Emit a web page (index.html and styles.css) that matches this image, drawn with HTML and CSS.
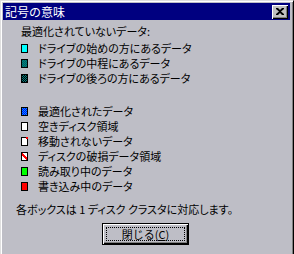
FILE: index.html
```html
<!DOCTYPE html>
<html lang="ja">
<head>
    <meta charset="UTF-8">
    <title>記号の意味</title>
    <link rel="stylesheet" href="styles.css">
</head>
<body>
    <div class="window">
        <div class="titlebar">
            <span class="title">記号の意味</span>
            <button class="close-btn" aria-label="閉じる">
                <svg width="8" height="7" viewBox="0 0 8 7">
                    <path d="M0 0h2l2 2 2-2h2v1l-3 2.5 3 2.5v1h-2l-2-2-2 2h-2v-1l3-2.5-3-2.5z" fill="#000"/>
                </svg>
            </button>
        </div>
        <div class="content">
            <div class="heading">最適化されていないデータ:</div>
            <ul class="legend">
                <li><span class="box cyan"></span>ドライブの始めの方にあるデータ</li>
                <li><span class="box teal"></span>ドライブの中程にあるデータ</li>
                <li><span class="box dark-teal"></span>ドライブの後ろの方にあるデータ</li>
            </ul>
            <ul class="legend second">
                <li><span class="box blue"></span>最適化されたデータ</li>
                <li><span class="box white"></span>空きディスク領域</li>
                <li><span class="box white fixed"></span>移動されないデータ</li>
                <li><span class="box white bad"></span>ディスクの破損データ領域</li>
                <li><span class="box green"></span>読み取り中のデータ</li>
                <li><span class="box red"></span>書き込み中のデータ</li>
            </ul>
            <p class="note">各ボックスは 1 ディスク クラスタに対応します。</p>
            <div class="actions">
                <button class="btn-default"><span class="focus">閉じる(<u>C</u>)</span></button>
            </div>
        </div>
    </div>
</body>
</html>
```

FILE: styles.css
```css
body {
    margin: 0;
    padding: 0;
    background: #bebec6;
    font-family: "Noto Sans CJK JP", "Noto Sans", sans-serif;
    color: #000;
}

.window {
    width: 294px;
    height: 254px;
    box-sizing: border-box;
    background: #bebec6;
    border-top: 1px solid #dfdfdf;
    border-left: 1px solid #dfdfdf;
    border-right: 1px solid #000;
    box-shadow: inset 1px 1px 0 #fff, inset -1px 0 0 #808080;
    padding: 2px 3px 0 2px;
    overflow: hidden;
}

.titlebar {
    height: 17px;
    background: #000080;
    display: flex;
    align-items: center;
    justify-content: space-between;
    padding: 0 2px 0 2px;
}

.title {
    color: #fff;
    font-size: 12px;
    line-height: 17px;
}

.close-btn {
    width: 16px;
    height: 14px;
    padding: 0;
    background: #c0c0c0;
    border: none;
    box-shadow: inset 1px 1px 0 #fff, inset -1px -1px 0 #000, inset -2px -2px 0 #808080;
    display: flex;
    align-items: center;
    justify-content: center;
}

.content {
    padding: 4px 0 0 18px;
    font-size: 11px;
    font-feature-settings: "palt";
}

.heading {
    line-height: 14px;
    height: 14px;
}

.legend {
    list-style: none;
    margin: 3px 0 0 0;
    padding: 0;
}

.legend.second {
    margin-top: 18px;
}

.legend li {
    display: flex;
    align-items: center;
    height: 15px;
    line-height: 15px;
}

.box {
    width: 7px;
    height: 9px;
    box-sizing: border-box;
    border: 1px solid #000;
    margin-right: 10px;
    flex-shrink: 0;
    position: relative;
}

.cyan { background: #00ffff; }
.teal { background: repeating-conic-gradient(#008080 0 25%, #006060 0 50%) 0 0 / 2px 2px; }
.dark-teal { background: repeating-conic-gradient(#008080 0 25%, #000 0 50%) 0 0 / 2px 2px; }
.blue { background: repeating-conic-gradient(#0000ff 0 25%, #00a0ff 0 50%) 0 0 / 2px 2px; }
.white { background: #fff; }
.green { background: #00ff00; }
.red { background: #ff0000; }

/* red corner mark */
.fixed::after {
    content: "";
    position: absolute;
    top: -1px;
    right: -1px;
    width: 2px;
    height: 2px;
    background: #ff0000;
}

/* red diagonal slash */
.bad {
    background: linear-gradient(45deg, #fff 0 42%, #ff0000 42% 58%, #fff 58% 100%);
    background: linear-gradient(-135deg, #fff 0 40%, #ff0000 40% 60%, #fff 60% 100%);
}

.note {
    margin: 8px 0 0 -5px;
    line-height: 15px;
}

.actions {
    display: flex;
    justify-content: center;
    margin-top: 6px;
    padding-right: 20px;
}

.btn-default {
    width: 87px;
    height: 22px;
    padding: 3px;
    background: #bebec6;
    border: 1px solid #000;
    box-shadow: inset 1px 1px 0 #fff, inset -1px -1px 0 #000, inset -2px -2px 0 #808080;
    font-family: inherit;
    font-size: 11px;
    display: flex;
    align-items: stretch;
}

.focus {
    flex: 1;
    border: 1px dotted #000;
    display: flex;
    align-items: center;
    justify-content: center;
    line-height: 12px;
}
```
